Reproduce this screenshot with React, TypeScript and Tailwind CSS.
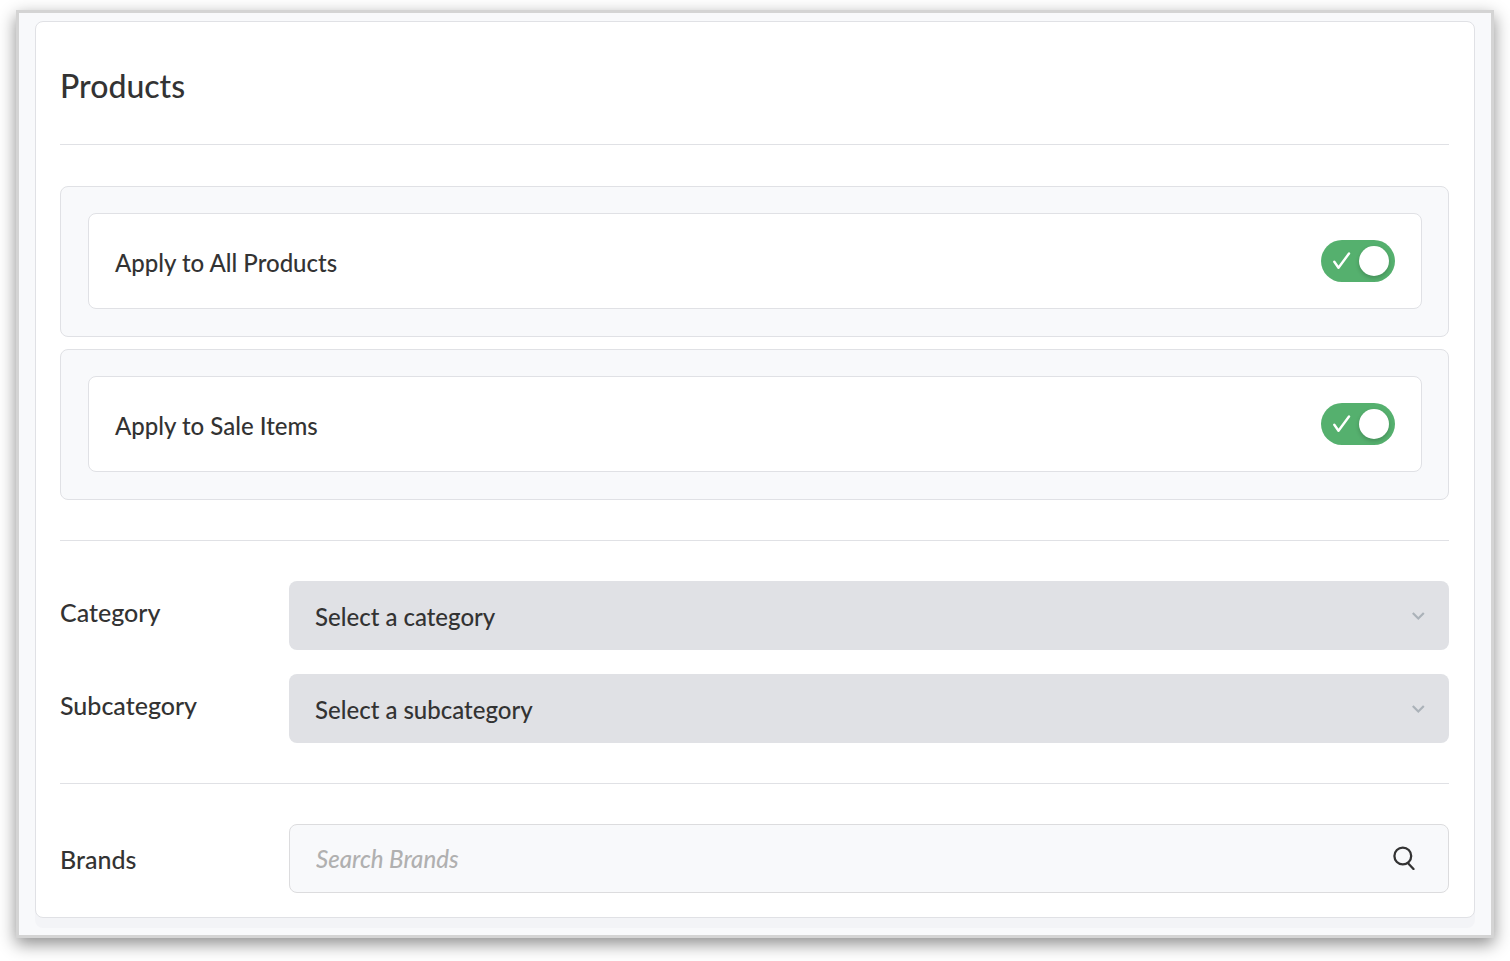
import { useState } from 'react'

interface ToggleRowProps {
  id: string
  label: string
  checked: boolean
  onChange: (checked: boolean) => void
}

interface SelectRowProps {
  id: string
  label: string
  placeholder: string
  options: string[]
}

const rowCls = 'grid grid-cols-[229px_minmax(0,1fr)] items-center'

const labelCls = 'text-[25px] leading-8'

function ToggleRow({ id, label, checked, onChange }: ToggleRowProps) {
  return (
    <div className="rounded-lg border border-[#e0e1e5] bg-[#f8f9fb] pt-[26px] pr-[26px] pb-[27px] pl-[27px]">
      <div className="flex h-24 items-center justify-between rounded-lg border border-[#e0e1e5] bg-white px-[26px]">
        <label htmlFor={id} className="pt-1 text-2xl leading-8">{label}</label>
        <div className="relative h-[42px] w-[74px]">
          <input
            id={id}
            type="checkbox"
            checked={checked}
            onChange={e => onChange(e.target.checked)}
            className="peer block h-full w-full cursor-pointer appearance-none rounded-full bg-gray-300 checked:bg-[#55b06e]"
          />
          <svg
            viewBox="0 0 18 18"
            className="pointer-events-none absolute top-3 left-3 hidden size-[18px] peer-checked:block"
            fill="none"
            stroke="white"
            strokeWidth="2.4"
            strokeLinecap="round"
            strokeLinejoin="round"
            aria-hidden="true"
          >
            <path d="M1.3 9.8 5.5 15.8 16 1.5" />
          </svg>
          <span className="pointer-events-none absolute top-1.5 left-1.5 size-[30px] rounded-full bg-white shadow-[0_2px_4px_rgba(0,0,0,0.2)] peer-checked:left-[38px]" />
        </div>
      </div>
    </div>
  )
}

function SelectRow({ id, label, placeholder, options }: SelectRowProps) {
  return (
    <div className={rowCls}>
      <label htmlFor={id} className={`${labelCls} pb-2`}>{label}</label>
      <div className="relative">
        <select
          id={id}
          disabled
          defaultValue=""
          className="block h-[69px] w-full appearance-none rounded-lg bg-[#e0e1e5] px-[26px] pt-0.5 text-2xl text-[#333] opacity-100"
        >
          <option value="">{placeholder}</option>
          {options.map(o => (
            <option key={o} value={o}>{o}</option>
          ))}
        </select>
        <svg
          viewBox="0 0 14 10"
          className="pointer-events-none absolute top-[30px] right-6 h-2.5 w-3.5"
          fill="none"
          stroke="#abb2b9"
          strokeWidth="2.2"
          aria-hidden="true"
        >
          <path d="M1.8 2 7.3 7.5 12.8 2" />
        </svg>
      </div>
    </div>
  )
}

function Divider() {
  return <hr className="my-10 border-t border-[#e0e1e5]" />
}

export default function App() {
  const [allProducts, setAllProducts] = useState(true)
  const [saleItems, setSaleItems] = useState(true)
  const [brand, setBrand] = useState('')

  return (
    <div className="bg-white px-4 pt-2.5 pb-[23px] font-[Lato,sans-serif] font-medium text-[#333]">
      <main className="border-[3px] border-[#d4d4d4] bg-[#f8f9fb] px-4 pt-2 pb-[17px] shadow-[0_6px_16px_rgba(0,0,0,0.45)]">
        <section className="rounded-lg border border-[#e0e1e5] bg-white pr-[25px] pb-6 pl-6 shadow-[0_10px_0_#f3f4f7]">
          <h1 className="pt-[46px] text-[32px] leading-9">Products</h1>

          <Divider />

          <div className="space-y-3 pt-px">
            <ToggleRow
              id="all-products"
              label="Apply to All Products"
              checked={allProducts}
              onChange={setAllProducts}
            />
            <ToggleRow
              id="sale-items"
              label="Apply to Sale Items"
              checked={saleItems}
              onChange={setSaleItems}
            />
          </div>

          <Divider />

          <div className="space-y-6">
            <SelectRow id="category" label="Category" placeholder="Select a category" options={[]} />
            <SelectRow id="subcategory" label="Subcategory" placeholder="Select a subcategory" options={[]} />
          </div>

          <Divider />

          <div className={rowCls}>
            <label htmlFor="brands" className={labelCls}>Brands</label>
            <div className="relative">
              <input
                id="brands"
                type="text"
                value={brand}
                onChange={e => setBrand(e.target.value)}
                placeholder="Search Brands"
                className="block h-[69px] w-full rounded-lg border border-[#dcdcde] bg-[#f8f9fb] pr-16 pl-[26px] text-2xl placeholder:text-[#b0b0b0] placeholder:italic"
              />
              <button type="button" aria-label="Search" className="absolute top-[22px] right-8 cursor-pointer">
                <svg
                  viewBox="0 0 24 24"
                  className="size-6"
                  fill="none"
                  stroke="#333"
                  strokeWidth="2.3"
                  strokeLinecap="round"
                  aria-hidden="true"
                >
                  <circle cx="9.8" cy="10" r="8.4" />
                  <path d="M14.8 17 20.5 23" />
                </svg>
              </button>
            </div>
          </div>
        </section>
      </main>
    </div>
  )
}
